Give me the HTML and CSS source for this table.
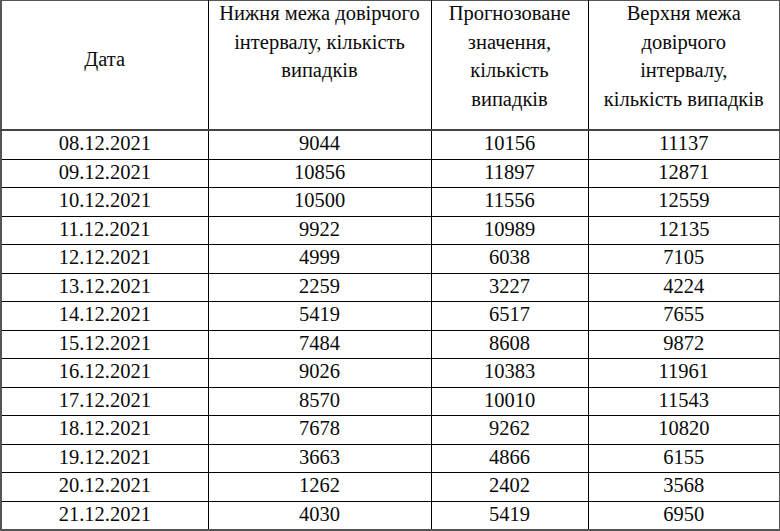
FILE: index.html
```html
<!DOCTYPE html>
<html lang="uk">
<head>
<meta charset="utf-8">
<link rel="stylesheet" href="styles.css">
</head>
<body>
<table class="forecast">
  <colgroup>
    <col class="c1"><col class="c2"><col class="c3"><col class="c4">
  </colgroup>
  <thead>
    <tr>
      <th class="date-head"><div class="hd">Дата</div></th>
      <th><div class="hd">Нижня межа довірчого<br>інтервалу, кількість<br>випадків</div></th>
      <th><div class="hd">Прогнозоване<br>значення,<br>кількість<br>випадків</div></th>
      <th><div class="hd">Верхня межа<br>довірчого<br>інтервалу,<br>кількість випадків</div></th>
    </tr>
  </thead>
  <tbody>
    <tr><td>08.12.2021</td><td>9044</td><td>10156</td><td>11137</td></tr>
    <tr><td>09.12.2021</td><td>10856</td><td>11897</td><td>12871</td></tr>
    <tr><td>10.12.2021</td><td>10500</td><td>11556</td><td>12559</td></tr>
    <tr><td>11.12.2021</td><td>9922</td><td>10989</td><td>12135</td></tr>
    <tr><td>12.12.2021</td><td>4999</td><td>6038</td><td>7105</td></tr>
    <tr><td>13.12.2021</td><td>2259</td><td>3227</td><td>4224</td></tr>
    <tr><td>14.12.2021</td><td>5419</td><td>6517</td><td>7655</td></tr>
    <tr><td>15.12.2021</td><td>7484</td><td>8608</td><td>9872</td></tr>
    <tr><td>16.12.2021</td><td>9026</td><td>10383</td><td>11961</td></tr>
    <tr><td>17.12.2021</td><td>8570</td><td>10010</td><td>11543</td></tr>
    <tr><td>18.12.2021</td><td>7678</td><td>9262</td><td>10820</td></tr>
    <tr><td>19.12.2021</td><td>3663</td><td>4866</td><td>6155</td></tr>
    <tr><td>20.12.2021</td><td>1262</td><td>2402</td><td>3568</td></tr>
    <tr><td>21.12.2021</td><td>4030</td><td>5419</td><td>6950</td></tr>
  </tbody>
</table>
</body>
</html>
```

FILE: styles.css
```css
html, body {
  margin: 0;
  padding: 0;
  background: #ffffff;
}

.forecast {
  border-collapse: collapse;
  table-layout: fixed;
  width: 779px;
  font-family: "Liberation Serif", "Times New Roman", serif;
  font-size: 20.5px;
  color: #0a0a0a;
  border: 1px solid #333;
}

.c1 { width: 207px; }
.c2 { width: 223px; }
.c3 { width: 157px; }
.c4 { width: 192px; }

.forecast th {
  font-weight: normal;
  vertical-align: top;
  text-align: center;
  padding: 0;
  height: 128px;
  line-height: 28.5px;
  border: 1px solid #000;
  border-bottom: 2px solid #444;
  border-top: 1px solid #555;
}

.forecast .hd {
  margin-top: -2px;
}

.forecast .date-head .hd {
  margin-top: 44px;
}

.forecast td {
  text-align: center;
  vertical-align: top;
  padding: 0;
  height: 27.5px;
  line-height: 24px;
  border: 1px solid #000;
}

.forecast tbody tr:last-child td {
  border-bottom: 2px solid #555;
}

.forecast td:first-child,
.forecast th:first-child {
  border-left: 2px solid #555;
}

.forecast td:last-child,
.forecast th:last-child {
  border-right: 2px solid #555;
}
```
